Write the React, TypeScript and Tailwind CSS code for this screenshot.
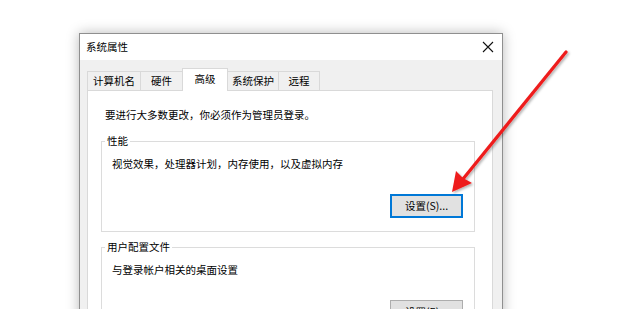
import React from "react";

const font = { fontFamily: '"Noto Sans CJK SC", "Noto Sans", sans-serif' };

function Tab({ label, w, active }: { label: string; w: string; active?: boolean }) {
  if (active) {
    return (
      <div
        className={`${w} h-[23px] -mb-[1px] relative z-10 bg-white border border-b-0 border-[#d9d9d9] flex items-start justify-center pt-[2px] text-[10.5px] leading-[16px] text-black`}
      >
        {label}
      </div>
    );
  }
  return (
    <div
      className={`${w} h-[19px] bg-[#f0f0f0] border border-b-0 border-[#d9d9d9] -ml-[1px] first:ml-0 flex items-center justify-center text-[10.5px] leading-[16px] text-black`}
    >
      {label}
    </div>
  );
}

function Group({
  title,
  desc,
  className,
  focused,
}: {
  title: string;
  desc: string;
  className?: string;
  focused?: boolean;
}) {
  return (
    <fieldset className={`border border-[#dcdcdc] w-[374px] ${className ?? ""}`}>
      <legend className="ml-[3px] px-[2px] text-[10.5px] leading-[16px] text-black">{title}</legend>
      <div className="pl-[10px] pt-[7px] text-[10.5px] leading-[16px] text-black">{desc}</div>
      <div className="flex justify-end pr-[11px] pt-[22px] pb-[13px]">
        {focused ? (
          <button className="w-[73px] h-[24px] bg-[#e1e1e1] border-2 border-[#0078d7] text-[10.5px] leading-[16px] text-black flex items-center justify-center">
            设置(S)...
          </button>
        ) : (
          <button className="w-[73px] h-[24px] bg-[#e1e1e1] border border-[#adadad] text-[10.5px] leading-[16px] text-black flex items-center justify-center">
            设置(E)...
          </button>
        )}
      </div>
    </fieldset>
  );
}

export default function App() {
  return (
    <div className="relative w-[620px] h-[309px] overflow-hidden bg-white" style={font}>
      <div className="ml-[79px] mt-[33px] w-[424px] h-[300px] border border-[#8f8f8f] bg-[#f0f0f0] shadow-[0_0_12px_rgba(0,0,0,0.28)]">
        {/* title bar */}
        <div className="h-[26px] bg-white flex items-center justify-between pl-[6px] pr-[7px]">
          <span className="text-[10.5px] leading-[16px] text-black">系统属性</span>
          <svg width="12" height="12" viewBox="0 0 12 12" className="mr-[1px]">
            <path d="M1 1 L11 11 M11 1 L1 11" stroke="#111" strokeWidth="1.1" />
          </svg>
        </div>
        {/* body */}
        <div className="pt-[7px] pl-[7px] pr-[9px]">
          <div className="flex items-end h-[23px]">
            <Tab label="计算机名" w="w-[54px]" />
            <Tab label="硬件" w="w-[43px]" />
            <div className="-ml-[1px]">
              <Tab label="高级" w="w-[46px]" active />
            </div>
            <div className="flex items-end -ml-[1px]">
              <Tab label="系统保护" w="w-[52px]" />
              <Tab label="远程" w="w-[42px]" />
            </div>
          </div>
          <div className="w-[406px] h-[260px] bg-white border border-[#d9d9d9] pt-[16px] pl-[13px]">
            <div className="pl-[4px] text-[10.5px] leading-[16px] text-black">
              要进行大多数更改，你必须作为管理员登录。
            </div>
            <Group className="mt-[10px]" title="性能" desc="视觉效果，处理器计划，内存使用，以及虚拟内存" focused />
            <Group className="mt-[7px]" title="用户配置文件" desc="与登录帐户相关的桌面设置" />
          </div>
        </div>
      </div>

      {/* red arrow annotation */}
      <svg className="absolute left-0 top-0" width="620" height="309" viewBox="0 0 620 309">
        <defs>
          <filter id="sh" x="-20%" y="-20%" width="140%" height="140%">
            <feDropShadow dx="1.5" dy="1.5" stdDeviation="1.2" floodColor="#000" floodOpacity="0.3" />
          </filter>
        </defs>
        <g filter="url(#sh)">
          <line x1="566" y1="52" x2="463" y2="179" stroke="#ee1c1c" strokeWidth="3.2" strokeLinecap="round" />
          <polygon points="452,192 456,171 463,178 472,183" fill="#ee1c1c" />
        </g>
      </svg>
    </div>
  );
}
